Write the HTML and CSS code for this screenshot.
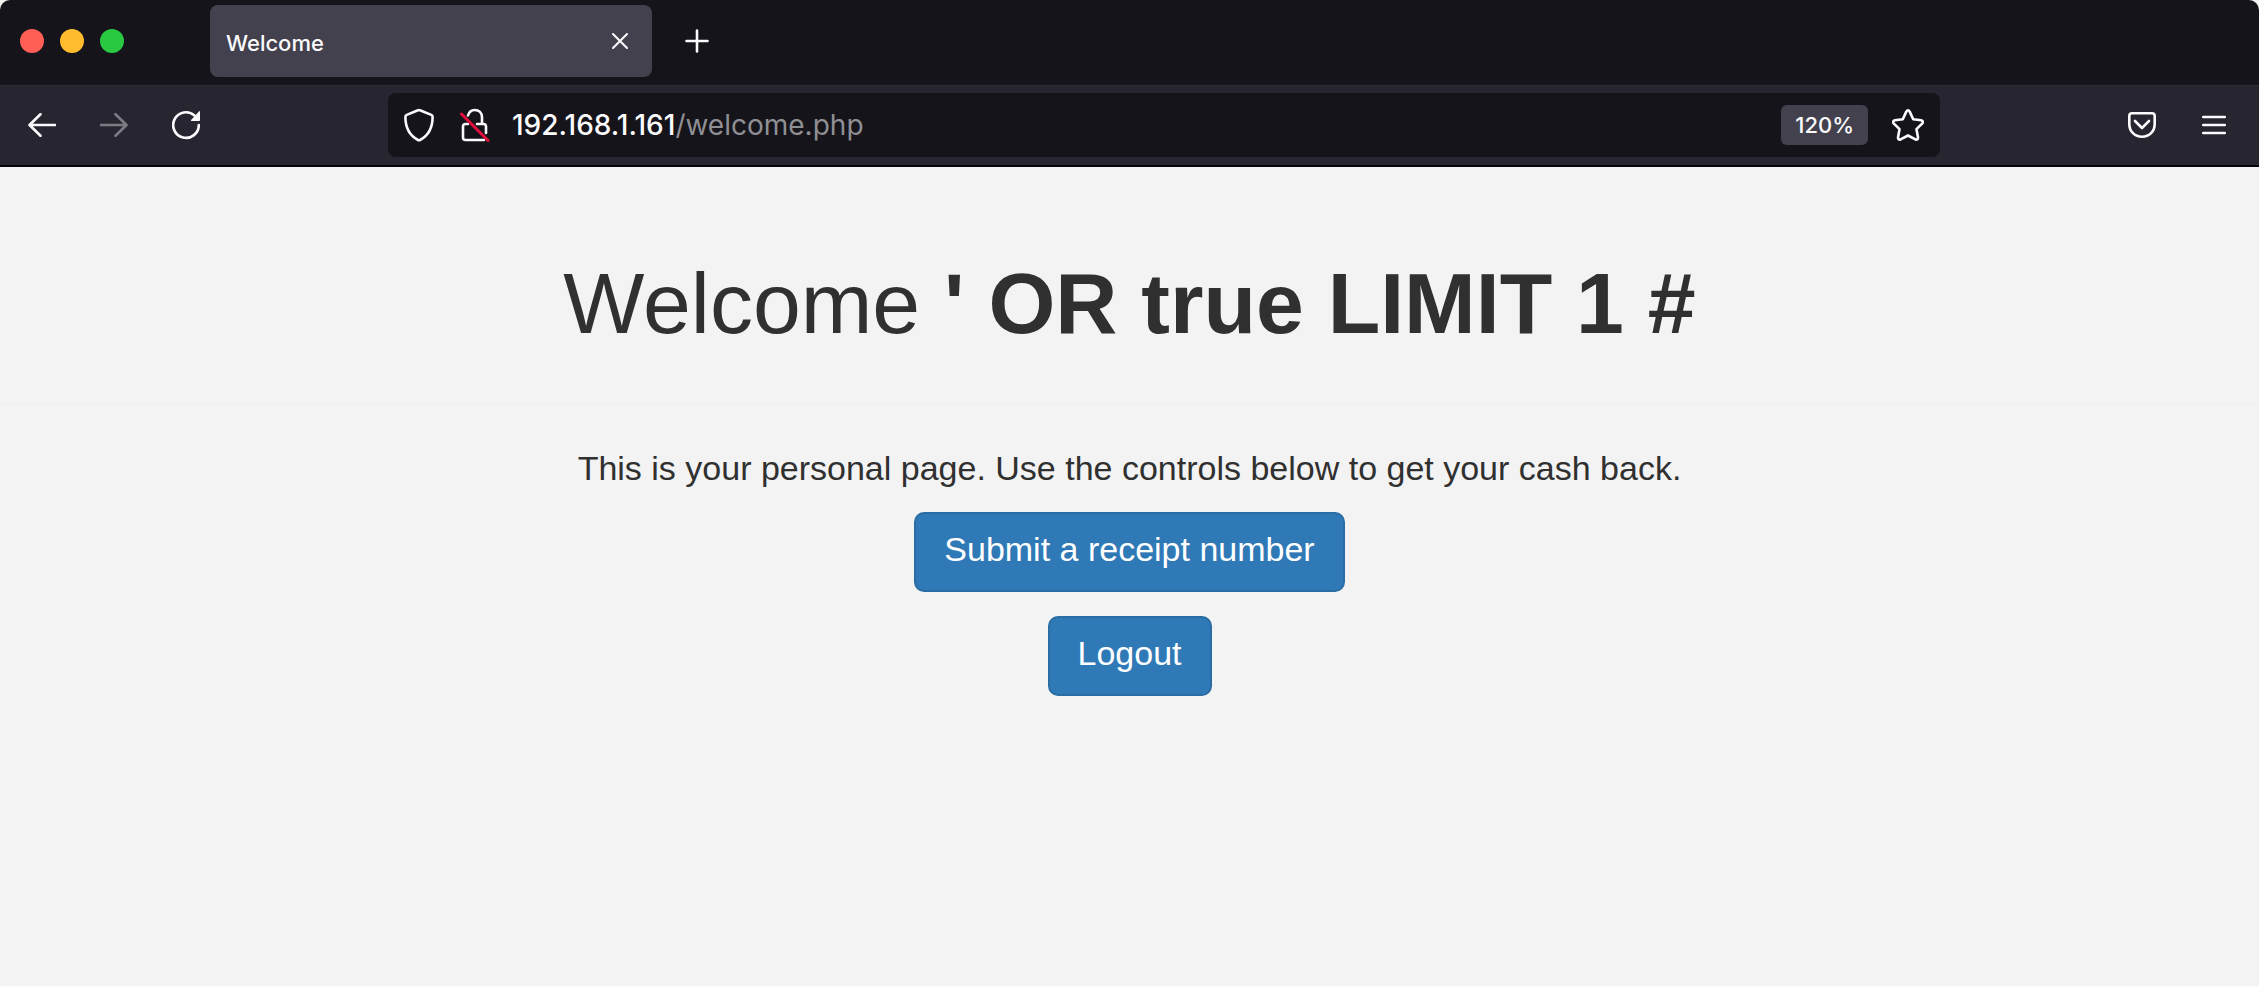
FILE: index.html
```html
<!DOCTYPE html>
<html lang="en">
<head>
<meta charset="utf-8">
<title>Welcome</title>
<link rel="stylesheet" href="styles.css">
</head>
<body>
<div class="window">
  <header class="chrome">
    <div class="tab-strip">
      <div class="window-controls">
        <button class="light light-close" type="button" aria-label="Close window"></button>
        <button class="light light-minimise" type="button" aria-label="Minimise window"></button>
        <button class="light light-zoom" type="button" aria-label="Zoom window"></button>
      </div>
      <div class="tab">
        <span class="tab-title">Welcome</span>
        <button class="icon-button" type="button" aria-label="Close tab">
          <svg width="16" height="16" viewBox="0 0 16 16"><path class="stroke-thin" d="M1 1l14 14M15 1L1 15"/></svg>
        </button>
      </div>
      <button class="icon-button new-tab" type="button" aria-label="New tab">
        <svg width="24" height="24" viewBox="0 0 24 24"><path class="stroke" d="M12 1.500v21M1.500 12h21"/></svg>
      </button>
    </div>
    <div class="toolbar">
      <nav class="button-group group-start">
        <button class="icon-button tool" type="button" aria-label="Back">
          <svg width="28" height="24" viewBox="0 0 28 24"><path class="stroke" d="M27 12H1.500M12.500 1.200L1.500 12l11 10.800"/></svg>
        </button>
        <button class="icon-button tool tool-dim" type="button" aria-label="Forward" disabled>
          <svg width="28" height="24" viewBox="0 0 28 24"><path class="stroke" d="M1 12h25.500M15.500 1.200l11 10.800-11 10.800"/></svg>
        </button>
        <button class="icon-button tool" type="button" aria-label="Reload">
          <svg width="28" height="30" viewBox="0 0 28 30"><path class="stroke" d="M26.800 15A12.800 12.800 0 1 1 22.500 5.500"/><path fill="currentColor" d="M27.200 1.200q.8-.6.8.5V10q0 1-1 1h-7.500q-1.200 0-.4-.9z"/></svg>
        </button>
      </nav>
      <div class="address-bar">
        <button class="icon-button" type="button" aria-label="Tracking protection">
          <svg width="30" height="34" viewBox="0 0 30 34"><path class="stroke" d="M14 2.300q1-.5 2 0l11.300 4.600q1.300.6 1.300 2.100C28.600 20 24.500 27.500 16 32q-1 .5-2 0C5.500 27.500 1.400 20 1.400 9q0-1.500 1.300-2.100z"/></svg>
        </button>
        <button class="icon-button" type="button" aria-label="Connection not secure">
          <svg width="30" height="34" viewBox="0 0 30 34"><path class="stroke" d="M8 7.500C9 4 11.500 2 14.700 2c4.200 0 7.300 3 7.300 7.300V16h1.500q2.500 0 2.500 2.500V25M8 16H5.500Q3 16 3 18.500v11Q3 32 5.500 32H24M17 16h5"/><path class="strike" d="M1.500 6l26.500 26.500"/></svg>
        </button>
        <a class="url" href="#"><span class="url-host">192.168.1.161</span>/welcome.php</a>
        <button class="zoom-level" type="button">120%</button>
        <button class="icon-button" type="button" aria-label="Bookmark">
          <svg width="32" height="32" viewBox="0 0 32 32"><path class="stroke" d="M14.300 2.600q1.700-2.600 3.400 0l3.500 7.600 7.900 1.100q3 .8 1 3.300l-5.600 5.600 1.500 8.200q.1 2.800-2.600 2L16 26.500l-7.400 3.900q-2.700.8-2.600-2l1.500-8.200-5.600-5.600q-2-2.500 1-3.300l7.900-1.100z"/></svg>
        </button>
      </div>
      <div class="button-group group-end">
        <button class="icon-button tool" type="button" aria-label="Save to Pocket">
          <svg width="28" height="26" viewBox="0 0 28 26"><path class="stroke" d="M4 1.300h20q2.700 0 2.700 2.700v8c0 7.500-5.500 12.700-12.700 12.700S1.300 19.500 1.300 12V4q0-2.700 2.700-2.700z"/><path class="stroke" d="M7 9l7 7 7-7"/></svg>
        </button>
        <button class="icon-button tool" type="button" aria-label="Menu">
          <svg width="24" height="20" viewBox="0 0 24 20"><path class="stroke" d="M1.200 2h21.600M1.200 10h21.600M1.200 18h21.600"/></svg>
        </button>
      </div>
    </div>
  </header>
  <main class="page">
    <div class="page-header">
      <h1 class="heading">Welcome <b>' OR true LIMIT 1 #</b></h1>
    </div>
    <div class="content">
      <p class="lead">This is your personal page. Use the controls below to get your cash back.</p>
      <a class="btn" href="#">Submit a receipt number</a>
      <a class="btn" href="#">Logout</a>
    </div>
  </main>
</div>
</body>
</html>
```

FILE: styles.css
```css
* {
  box-sizing: border-box;
}

body {
  margin: 0;
  background: #f3f3f3;
}

.window {
  min-height: 100vh;
}

.chrome {
  font-family: Inter, Roboto, sans-serif;
  color: #fbfbfe;
  background: #15141a;
  border-bottom: 2px solid #050408;
  border-radius: 10px 10px 0 0;
}

button {
  margin: 0;
  padding: 0;
  border: 0;
  background: none;
  color: inherit;
  font: inherit;
}

.icon-button {
  display: flex;
  align-items: center;
  justify-content: center;
  flex: none;
}

.stroke,
.stroke-thin,
.strike {
  fill: none;
  stroke: currentColor;
  stroke-width: 2.6;
  stroke-linecap: round;
  stroke-linejoin: round;
}

.stroke-thin {
  stroke-width: 2;
}

.strike {
  stroke: #e2103c;
  stroke-width: 3;
}

.tab-strip {
  display: flex;
  align-items: center;
  height: 85px;
  padding: 0 20px 3px;
}

.window-controls {
  display: flex;
  gap: 16px;
  margin-right: 86px;
}

.light {
  width: 24px;
  height: 24px;
  border-radius: 50%;
}

.light-close {
  background: #ff5f57;
}

.light-minimise {
  background: #febc2e;
}

.light-zoom {
  background: #28c840;
}

.tab {
  display: flex;
  align-items: center;
  justify-content: space-between;
  width: 442px;
  height: 72px;
  padding: 0 24px 0 16px;
  background: #42414d;
  border-radius: 8px;
}

.tab-title {
  padding-top: 4px;
  font-size: 22px;
  font-weight: 500;
  line-height: 28px;
}

.new-tab {
  margin-left: 33px;
}

.toolbar {
  display: flex;
  align-items: center;
  height: 80px;
  padding: 0 13px 1px 10px;
  background: #272530;
  border-top: 1px solid #2b2a33;
}

.button-group {
  display: flex;
  gap: 8px;
}

.group-start {
  flex: 17 0 208px;
}

.group-end {
  flex: 17 0 136px;
  justify-content: flex-end;
}

.tool {
  width: 64px;
  height: 64px;
}

.tool-dim {
  color: #7c7b84;
}

.address-bar {
  display: flex;
  align-items: center;
  flex: 152 1 0;
  height: 64px;
  padding: 0 16px;
  background: #15141a;
  border-radius: 8px;
}

.address-bar .icon-button + .icon-button {
  margin-left: 26px;
}

.url {
  flex: 1;
  margin-left: 22px;
  font-size: 28px;
  line-height: 36px;
  color: #8f8f94;
  text-decoration: none;
}

.url-host {
  color: #fbfbfe;
  font-weight: 500;
}

.zoom-level {
  height: 40px;
  margin-right: 24px;
  padding: 0 14px;
  font-size: 22px;
  font-weight: 500;
  background: #42414d;
  border-radius: 6px;
}

.page {
  font-family: "Liberation Sans", Arial, sans-serif;
  color: #303030;
  text-align: center;
}

.page-header {
  padding: 88px 24px 53px;
  border-bottom: 1px solid #efefef;
}

.heading {
  margin: 0;
  font-size: 86px;
  font-weight: 400;
  line-height: 96px;
}

.content {
  display: flex;
  flex-direction: column;
  align-items: center;
  gap: 24px;
  padding: 39px 24px;
}

.lead {
  margin: 0 0 -4px;
  font-size: 34px;
  line-height: 48px;
}

.btn {
  padding: 11px 28px 17px;
  font-size: 34px;
  line-height: 48px;
  color: #fff;
  text-decoration: none;
  background: #2f79b6;
  border: 2px solid #2a6da5;
  border-radius: 10px;
}
```
